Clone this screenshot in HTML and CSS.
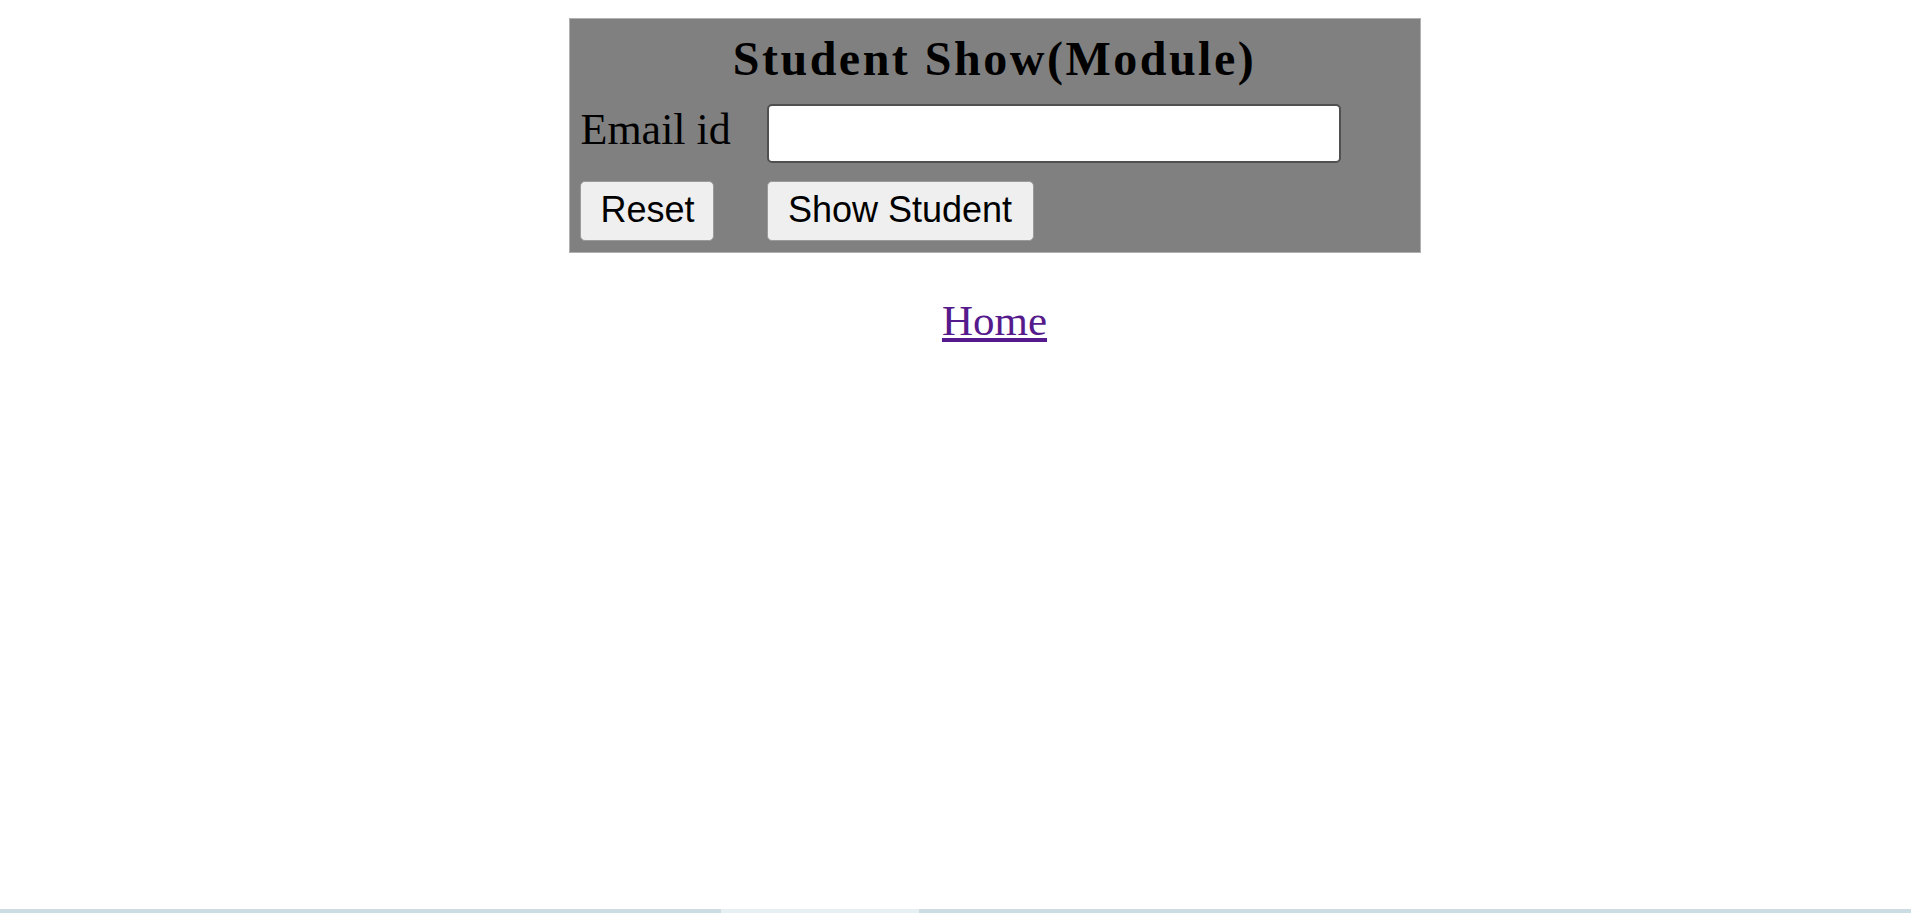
FILE: index.html
```html
<!DOCTYPE html>
<html lang="en">
<head>
<meta charset="utf-8">
<title>Student Show(Module)</title>
<link rel="stylesheet" href="styles.css">
</head>
<body>
<main class="page">
  <form class="panel">
    <h1 class="panel-title">Student Show(Module)</h1>
    <div class="panel-grid">
      <label class="field-label" for="email">Email id</label>
      <input class="field-input" id="email" type="text">
      <button class="btn btn-reset" type="reset">Reset</button>
      <button class="btn btn-show" type="button">Show Student</button>
    </div>
  </form>
  <a class="home-link" href="#">Home</a>
</main>
<div class="bottom-strip">
  <span class="strip-a"></span>
  <span class="strip-b"></span>
  <span class="strip-c"></span>
</div>
</body>
</html>
```

FILE: styles.css
```css
html, body {
  margin: 0;
  padding: 0;
  background: #ffffff;
}

body {
  font-family: "Liberation Serif", "Times New Roman", serif;
  color: #000;
}

.page {
  display: flex;
  flex-direction: column;
  align-items: center;
  padding-left: 72px;
  padding-top: 18px;
}

.panel {
  box-sizing: border-box;
  width: 852px;
  margin: 0;
  background: #808080;
  border: 1px solid #b0b0b0;
  padding: 13px 12px 11px 10px;
}

.panel-title {
  margin: 0 0 18px;
  font-family: "Liberation Serif", "Times New Roman", serif;
  font-weight: bold;
  font-size: 48px;
  line-height: 54px;
  letter-spacing: 2.5px;
  text-align: center;
  padding-left: 2px;
}

.panel-grid {
  display: grid;
  grid-template-columns: 187px 1fr;
  row-gap: 18px;
  align-items: start;
}

.field-label {
  font-size: 44px;
  line-height: 52px;
  padding-left: 1px;
}

.field-input {
  box-sizing: border-box;
  width: 574px;
  height: 59px;
  margin: 0;
  border: 2px solid #505050;
  border-radius: 5px;
  background: #fff;
  font-size: 30px;
}

.btn {
  box-sizing: border-box;
  height: 60px;
  margin: 0;
  padding: 0 20px 3px;
  font-family: "Liberation Sans", Arial, sans-serif;
  font-size: 36px;
  color: #000;
  background: #efefef;
  border: 1px solid #9a9a9a;
  border-radius: 5px;
  justify-self: start;
}

.btn-reset {
  width: 134px;
}

.btn-show {
  width: 267px;
}

.home-link {
  margin-top: 43px;
  font-size: 43px;
  line-height: 49px;
  color: #551a8b;
  text-decoration: underline;
}

.bottom-strip {
  position: fixed;
  left: 0;
  right: 0;
  bottom: 0;
  height: 4px;
  display: flex;
}

.strip-a {
  width: 721px;
  background: #cbdde3;
}

.strip-b {
  width: 198px;
  background: #e6f0f2;
}

.strip-c {
  flex: 1;
  background: #cbdde3;
  border-right: 6px solid #fdfefe;
}
```
